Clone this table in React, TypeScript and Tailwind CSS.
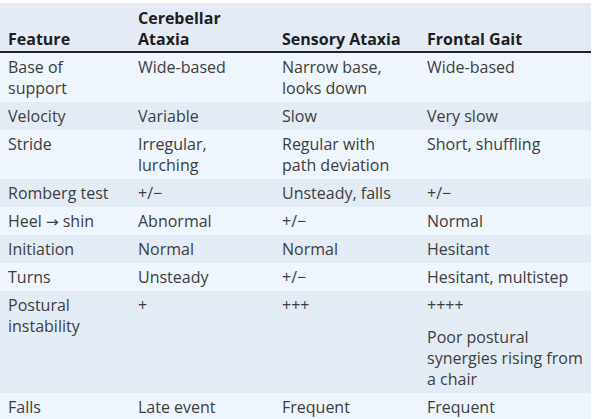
import React from "react";

type Row = { f: React.ReactNode; c: React.ReactNode; s: React.ReactNode; g: React.ReactNode };

const rows: Row[] = [
  { f: <>Base of<br />support</>, c: "Wide-based", s: <>Narrow base,<br />looks down</>, g: "Wide-based" },
  { f: "Velocity", c: "Variable", s: "Slow", g: "Very slow" },
  { f: "Stride", c: <>Irregular,<br />lurching</>, s: <>Regular with<br />path deviation</>, g: "Short, shuffling" },
  { f: "Romberg test", c: "+/\u2212", s: "Unsteady, falls", g: "+/\u2212" },
  {
    f: (
      <>
        Heel <span style={{ fontFamily: '"DejaVu Sans", sans-serif' }} className="text-[15px] leading-none">{"\u2192"}</span> shin
      </>
    ),
    c: "Abnormal",
    s: "+/\u2212",
    g: "Normal",
  },
  { f: "Initiation", c: "Normal", s: "Normal", g: "Hesitant" },
  { f: "Turns", c: "Unsteady", s: "+/\u2212", g: "Hesitant, multistep" },
  {
    f: <>Postural<br />instability</>,
    c: "+",
    s: "+++",
    g: (
      <>
        <div>++++</div>
        <div className="mt-[11px]">Poor postural<br />synergies rising from<br />a chair</div>
      </>
    ),
  },
  { f: "Falls", c: "Late event", s: "Frequent", g: "Frequent" },
];

export default function App() {
  return (
    <div
      className="w-[593px] h-[419px] bg-white pt-[3px] overflow-hidden text-[#3d3d3d]"
      style={{ fontFamily: '"Open Sans", "Noto Sans", sans-serif' }}
    >
      <div className="w-[591px]">
        <div className="grid grid-cols-[130px_144px_145px_172px] bg-[#e4ebf6] border-b-2 border-[#222] items-end pb-[1px] pt-[5px] text-[16px] leading-[21px] font-bold text-[#1e1e1e]">
          <div className="pl-[8px]">Feature</div>
          <div className="pl-[8px]">Cerebellar<br />Ataxia</div>
          <div className="pl-[8px]">Sensory Ataxia</div>
          <div className="pl-[8px]">Frontal Gait</div>
        </div>
        {rows.map((r, i) => (
          <div
            key={i}
            className={`grid grid-cols-[130px_144px_145px_172px] text-[16px] leading-[21px] pt-[4px] pb-[3px] ${
              i % 2 === 0 ? "bg-[#eef5fc]" : "bg-[#e3ebf5]"
            }`}
          >
            <div className="pl-[8px] h-fit">{r.f}</div>
            <div className="pl-[8px]">{r.c}</div>
            <div className="pl-[8px]">{r.s}</div>
            <div className="pl-[8px]">{r.g}</div>
          </div>
        ))}
      </div>
    </div>
  );
}
